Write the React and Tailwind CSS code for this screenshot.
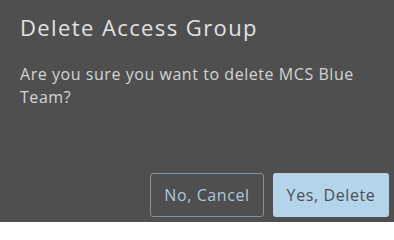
export default function App() {
    return (
        <div className="flex h-[222px] w-[394px] flex-col bg-[#4f4f4f] font-['Open_Sans',sans-serif]">
            <div className="px-5 pt-[12px]">
                <h2 className="text-[22px] leading-[30px] tracking-[1.4px] text-[#e2e2e2]">Delete Access Group</h2>
                <p className="mt-[21px] w-[354px] text-[16px] leading-[23px] tracking-[0.55px] text-[#d4d4d4]">
                    Are you sure you want to delete MCS Blue Team?
                </p>
            </div>
            <div className="mt-auto flex justify-end gap-[9px] pb-[5px] pr-[5px]">
                <button className="h-[44px] w-[114px] rounded-[3px] border border-[#7f94a3] text-[16px] tracking-[0.6px] text-[#acc9de]">
                    No, Cancel
                </button>
                <button className="h-[44px] w-[116px] rounded-[3px] bg-[#b4d4ea] text-[16px] tracking-[0.6px] text-[#4b4f53]">
                    Yes, Delete
                </button>
            </div>
        </div>
    );
}
